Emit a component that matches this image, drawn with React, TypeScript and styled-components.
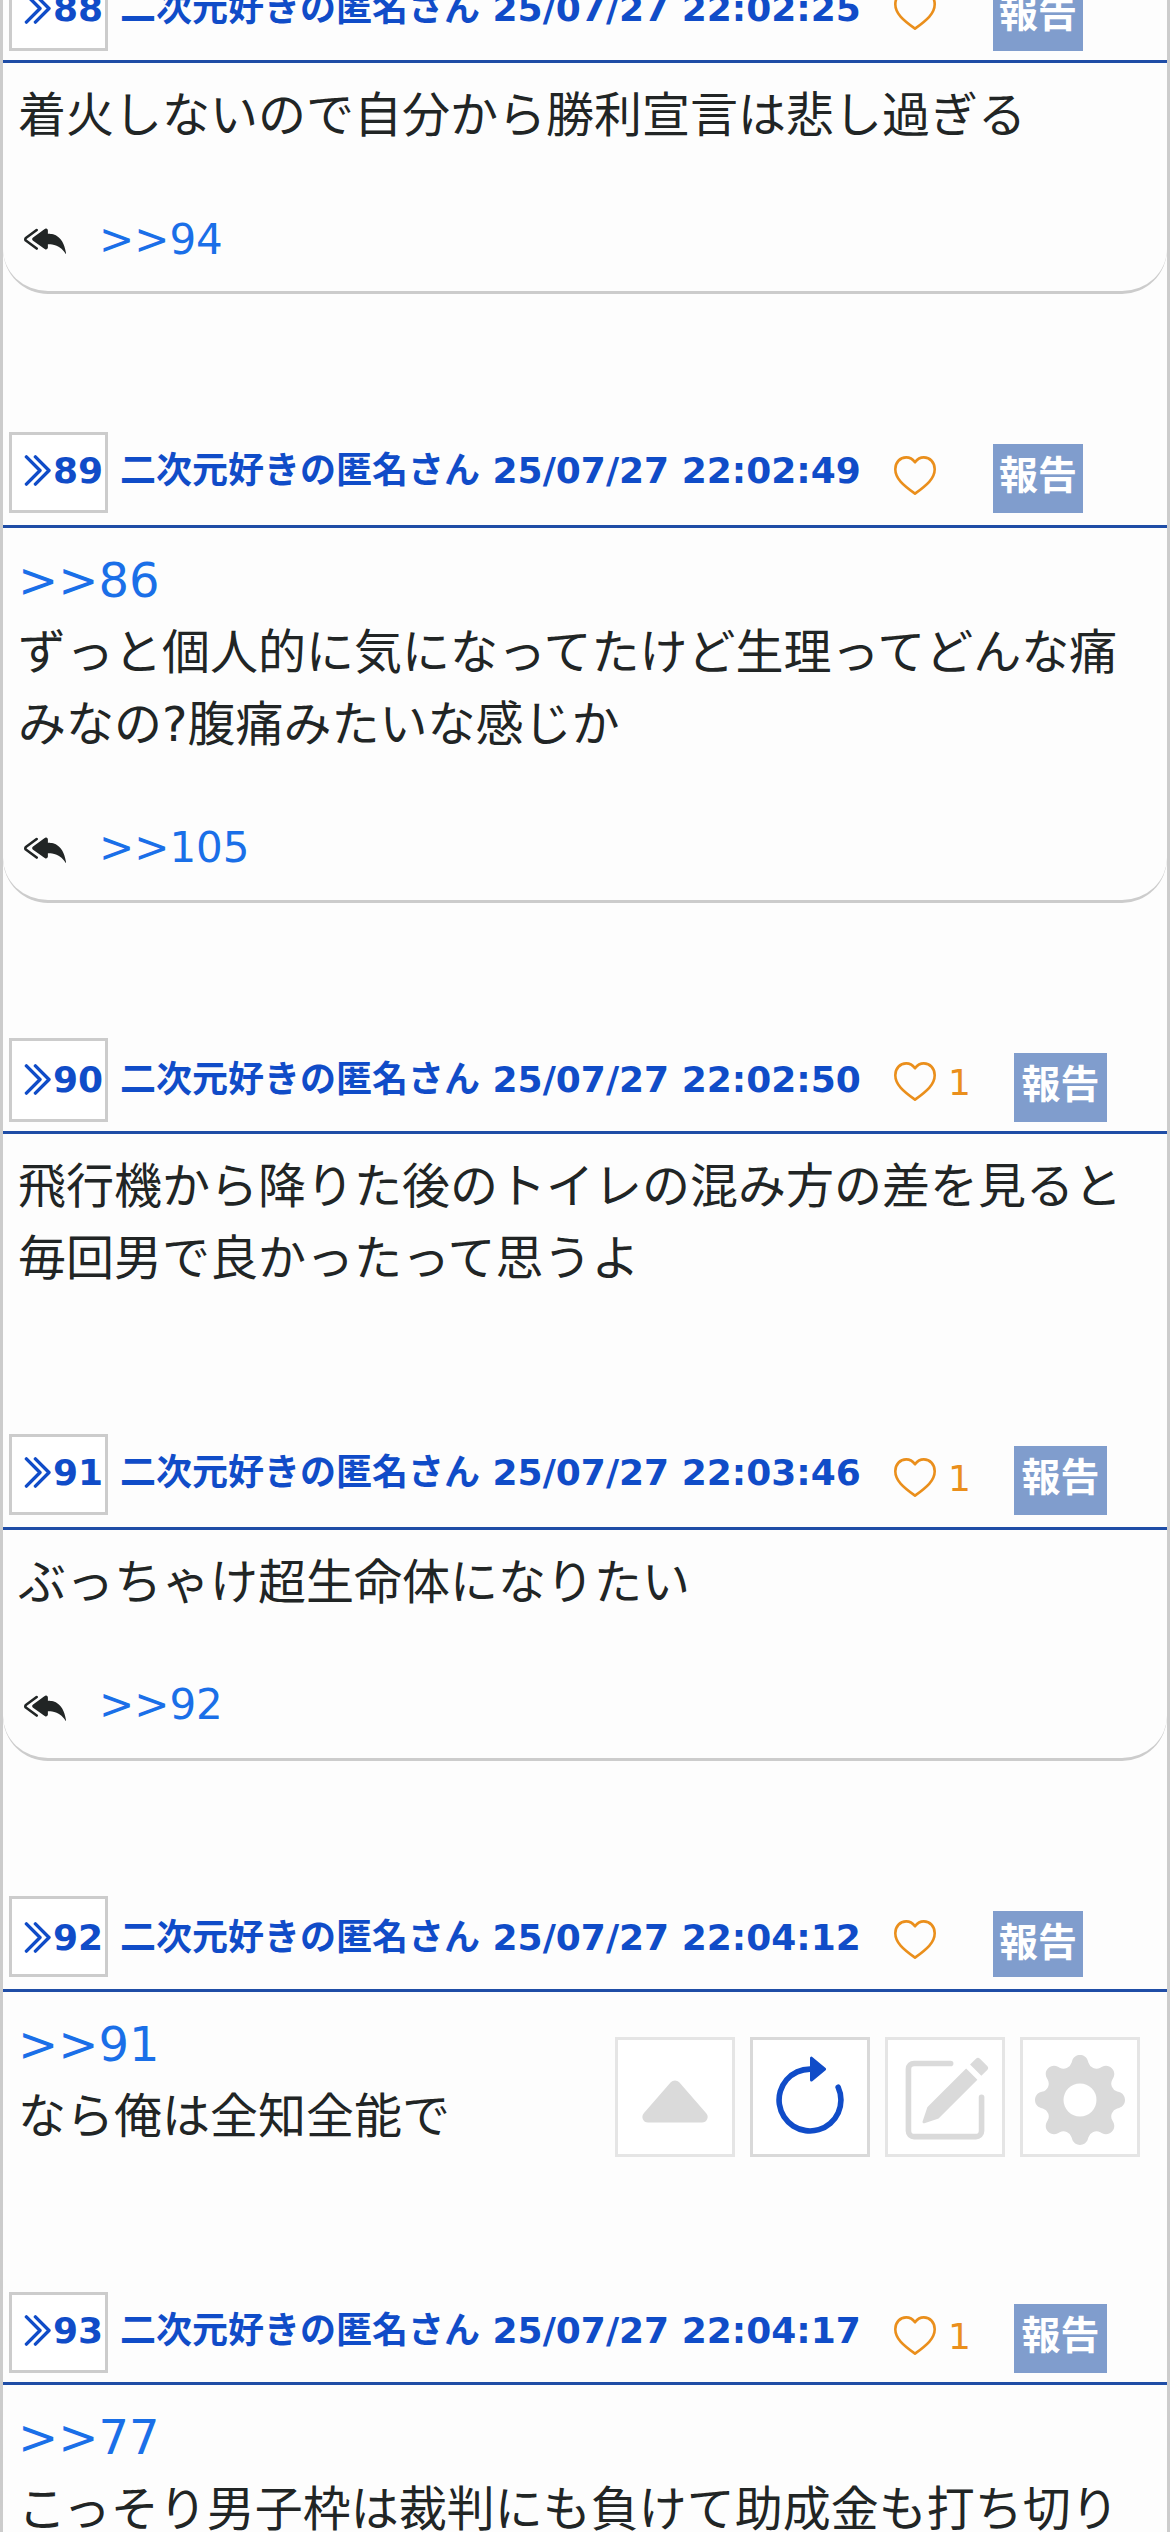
import React from "react";
import styled, { createGlobalStyle } from "styled-components";
import {
  BsArrowClockwise,
  BsCaretUpFill,
  BsGearFill,
  BsPencilSquare,
  BsReplyAllFill,
} from "react-icons/bs";

const color = {
  page: "#fdfdfd",
  frame: "#cccccc",
  name: "#104cc8",
  rule: "#1f4da6",
  link: "#1a6fe8",
  text: "#212525",
  heart: "#ea8f1c",
  report: "#809dcd",
};

const GlobalStyle = createGlobalStyle`
  * { box-sizing: border-box; }
  body { margin: 0; background: ${color.page}; overflow: hidden; }
`;

const Page = styled.div`
  width: 1170px;
  height: 2532px;
  overflow: hidden;
  display: flow-root;
  border: solid ${color.frame};
  border-width: 0 3px;
  background: ${color.page};
  color: ${color.text};
  font-family: "DejaVu Sans", "Noto Sans CJK JP", sans-serif;
`;

const Thread = styled.main`
  display: flex;
  flex-direction: column;
  margin-top: -30px;
`;

const Post = styled.article`
  display: flex;
  flex-direction: column;
`;

const PostHeader = styled.header<{ $gap: number }>`
  display: flex;
  align-items: flex-end;
  padding: 0 0 ${(p) => p.$gap}px 6px;
  border-bottom: 3px solid ${color.rule};
`;

const NumberBox = styled.button<{ $height: number; $drop: number }>`
  display: flex;
  align-items: flex-end;
  width: 99px;
  height: ${(p) => p.$height}px;
  padding: 0 0 ${(p) => 12 - p.$drop}px 12px;
  border: 3px solid ${color.frame};
  background: #fff;
  color: ${color.name};
  font: bold 36px/54px "DejaVu Sans", sans-serif;

  svg {
    flex: none;
    width: 28px;
    height: 31px;
    margin: 0 1px 12px 0;
  }
`;

const Author = styled.span<{ $drop: number }>`
  width: 774px;
  margin: 0 0 ${(p) => 15 - p.$drop}px 12px;
  color: ${color.name};
  font-weight: bold;
  font-size: 36px;
  line-height: 54px;
  white-space: nowrap;
`;

const Like = styled.span<{ $wide: boolean; $lift: number }>`
  display: flex;
  align-items: flex-end;
  gap: 12px;
  width: ${(p) => (p.$wide ? 120 : 99)}px;
  margin-bottom: ${(p) => 18 + p.$lift}px;
  color: ${color.heart};

  svg {
    width: 42px;
    height: 39px;
  }
`;

const LikeCount = styled.span`
  margin-bottom: -3px;
  font-size: 36px;
  line-height: 42px;
`;

const Report = styled.button<{ $wide: boolean; $height: number }>`
  display: flex;
  justify-content: center;
  align-items: flex-start;
  width: ${(p) => (p.$wide ? 93 : 90)}px;
  height: ${(p) => p.$height}px;
  padding: 2px 0 0;
  border: 0;
  background: ${color.report};
  color: #fff;
  font: bold 39px/60px "DejaVu Sans", "Noto Sans CJK JP", sans-serif;
  white-space: nowrap;
`;

const Content = styled.div<{ $card: boolean; $after: number }>`
  display: flex;
  flex-direction: column;
  padding: 16px 12px 0 15px;
  margin-bottom: ${(p) => p.$after}px;
  border-bottom: ${(p) => (p.$card ? `3px solid ${color.frame}` : "0")};
  border-radius: 0 0 45px 45px;
`;

const Line = styled.p`
  margin: 0;
  font-size: 48px;
  line-height: 72px;
  white-space: nowrap;
`;

const Anchor = styled.a`
  color: ${color.link};
`;

const Replies = styled.div<{ $drop: number }>`
  display: flex;
  align-items: flex-start;
  height: 92px;
  margin-top: 48px;
  padding: 9px 0 0 6px;
  font-size: 42px;
  line-height: 60px;

  svg {
    width: 42px;
    height: 42px;
    margin: 10px 33px 0 0;
  }

  a {
    margin-top: ${(p) => p.$drop}px;
  }
`;

const Toolbar = styled.nav`
  position: fixed;
  top: 2037px;
  left: 615px;
  display: flex;
  gap: 15px;
`;

const Tool = styled.button<{ $active?: boolean }>`
  width: 120px;
  height: 120px;
  padding: 15px 12px 9px;
  border: 3px solid ${(p) => (p.$active ? "#d9d9d9" : "#e5e5e5")};
  background: #fff;
  color: ${(p) => (p.$active ? color.name : "#dadada")};

  svg {
    display: block;
    width: 90px;
    height: 90px;
  }
`;

function QuoteIcon() {
  return (
    <svg viewBox="0 0 28 31" fill="none" stroke="currentColor" strokeWidth="3.4" strokeLinecap="round" strokeLinejoin="round">
      <path d="M2.4 1.9 16 15.5 2.4 29.1M11.4 1.9 25 15.5 11.4 29.1" />
    </svg>
  );
}

function HeartIcon() {
  return (
    <svg viewBox="0 0 42 39" fill="none" stroke="currentColor" strokeWidth="2.6" strokeLinejoin="round">
      <path d="M21 6.3C18.6 3 15.4 1.4 12.2 1.4 6 1.4 1.3 6.4 1.3 13.2 1.3 22.6 9.4 29.3 21 37.6 32.600 29.3 40.700 22.6 40.700 13.2 40.700 6.4 36 1.400 29.800 1.400 26.600 1.400 23.400 3 21 6.300Z" />
    </svg>
  );
}

type PostData = {
  no: number;
  time: string;
  likes?: number;
  lines: string[];
  reply?: string;
  replyDrop?: number;
  boxHeight: number;
  reportHeight: number;
  gap: number;
  drop?: number;
  lift?: number;
  after: number;
};

const posts: PostData[] = [
  { no: 88, time: "22:02:25", lines: ["着火しないので自分から勝利宣言は悲し過ぎる"], reply: ">>94", replyDrop: 2, boxHeight: 81, reportHeight: 69, gap: 9, lift: 3, after: 138 },
  { no: 89, time: "22:02:49", lines: [">>86", "ずっと個人的に気になってたけど生理ってどんな痛", "みなの?腹痛みたいな感じか"], reply: ">>105", replyDrop: 1, boxHeight: 81, reportHeight: 69, gap: 12, after: 135 },
  { no: 90, time: "22:02:50", likes: 1, lines: ["飛行機から降りた後のトイレの混み方の差を見ると", "毎回男で良かったって思うよ"], boxHeight: 84, reportHeight: 69, gap: 9, lift: 3, after: 140 },
  { no: 91, time: "22:03:46", likes: 1, lines: ["ぶっちゃけ超生命体になりたい"], reply: ">>92", boxHeight: 81, reportHeight: 69, gap: 12, after: 135 },
  { no: 92, time: "22:04:12", lines: [">>91", "なら俺は全知全能で"], boxHeight: 81, reportHeight: 66, gap: 12, drop: 3, after: 140 },
  { no: 93, time: "22:04:17", likes: 1, lines: [">>77", "こっそり男子枠は裁判にも負けて助成金も打ち切り"], boxHeight: 81, reportHeight: 69, gap: 9, after: 140 },
];

function PostItem({ post }: { post: PostData }) {
  const drop = post.drop ?? 0;
  const liked = post.likes !== undefined;
  return (
    <Post>
      <PostHeader $gap={post.gap}>
        <NumberBox $height={post.boxHeight} $drop={drop}>
          <QuoteIcon />
          {post.no}
        </NumberBox>
        <Author $drop={drop}>二次元好きの匿名さん 25/07/27 {post.time}</Author>
        <Like $wide={liked} $lift={post.lift ?? 0}>
          <HeartIcon />
          {liked && <LikeCount>{post.likes}</LikeCount>}
        </Like>
        <Report $wide={liked} $height={post.reportHeight}>報告</Report>
      </PostHeader>
      <Content $card={!!post.reply} $after={post.after}>
        {post.lines.map((line) => (
          <Line key={line}>{line.startsWith(">>") ? <Anchor>{line}</Anchor> : line}</Line>
        ))}
        {post.reply && (
          <Replies $drop={post.replyDrop ?? 0}>
            <BsReplyAllFill />
            <Anchor>{post.reply}</Anchor>
          </Replies>
        )}
      </Content>
    </Post>
  );
}

export default function App() {
  return (
    <Page>
      <GlobalStyle />
      <Thread>
        {posts.map((post) => (
          <PostItem key={post.no} post={post} />
        ))}
      </Thread>
      <Toolbar>
        <Tool><BsCaretUpFill /></Tool>
        <Tool $active><BsArrowClockwise /></Tool>
        <Tool><BsPencilSquare /></Tool>
        <Tool><BsGearFill /></Tool>
      </Toolbar>
    </Page>
  );
}
